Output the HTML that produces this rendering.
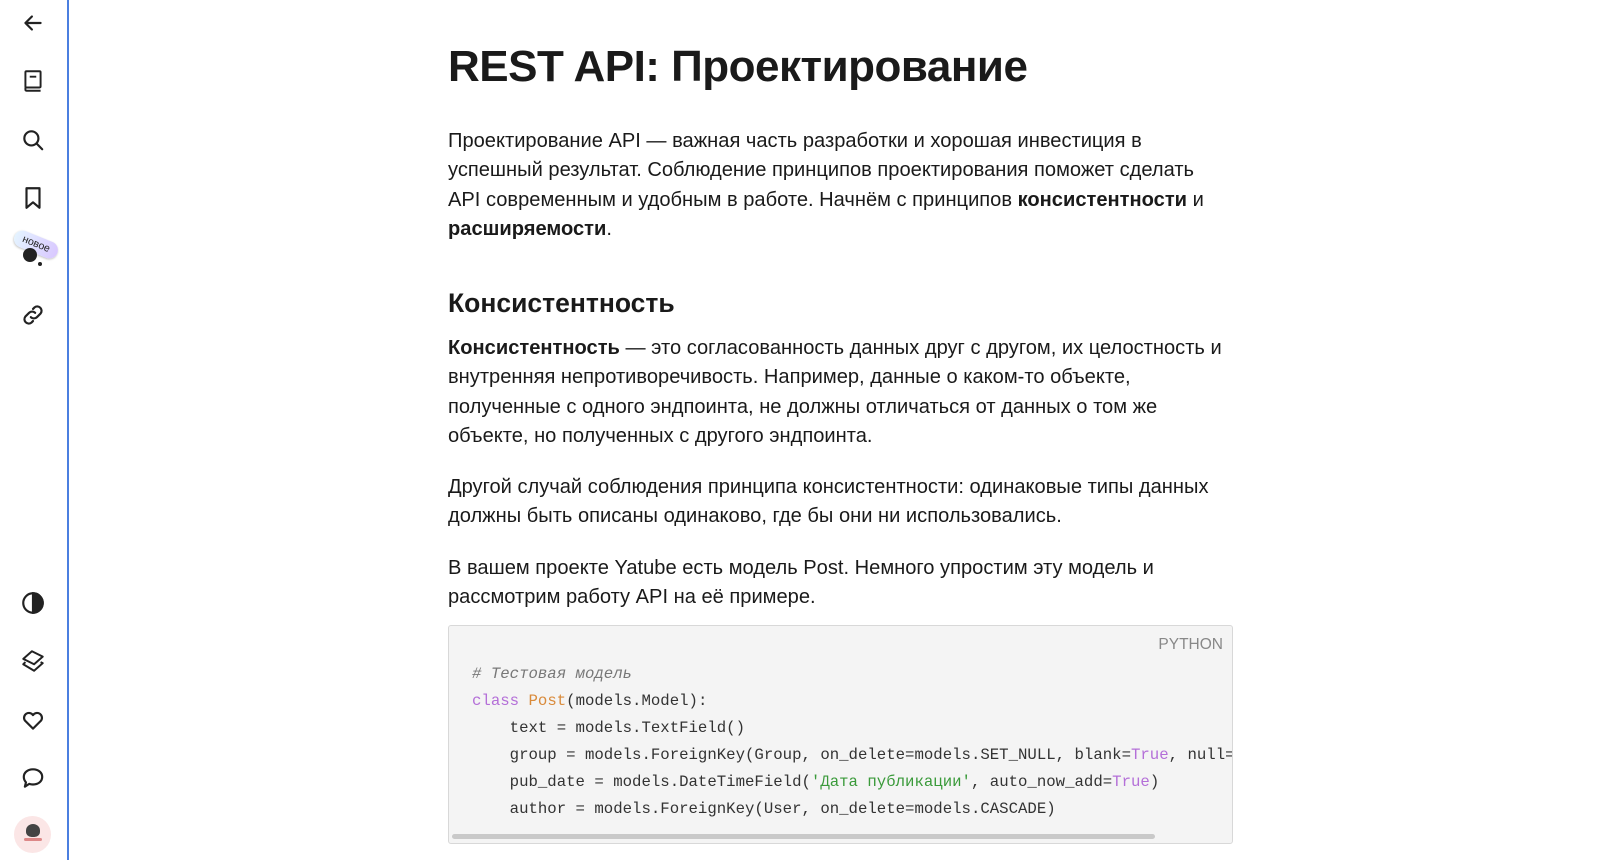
<!DOCTYPE html>
<html><head><meta charset="utf-8"><style>
body{margin:0;width:1600px;height:860px;background:#fff;font-family:"Liberation Sans",sans-serif;color:#1a1a1a;overflow:hidden;position:relative}
.side{position:absolute;left:0;top:0;width:67px;height:860px;border-right:2px solid #4b7fe0}
.ic{position:absolute;left:20px;width:26px;height:26px}
.main{position:absolute;left:448px;top:0;width:800px}
h1{position:absolute;top:42px;margin:0;font-size:44px;font-weight:700;white-space:nowrap;letter-spacing:-0.5px}
.p{position:absolute;font-size:20.1px;line-height:29.4px;white-space:nowrap}
h2{position:absolute;top:288px;margin:0;font-size:26.5px;font-weight:700;white-space:nowrap}
.code{position:absolute;left:448px;top:625px;width:783px;height:217px;background:#f4f4f4;border:1px solid #d8d8d8;border-radius:3px;overflow:hidden}
.code pre{margin:0;position:absolute;left:23px;top:35px;font-family:"Liberation Mono",monospace;font-size:15.7px;line-height:27px;color:#333}
.lang{position:absolute;right:9px;top:10px;font-size:15.5px;color:#888}
.sb{position:absolute;left:3px;bottom:4px;width:703px;height:5px;background:#c9c9c9;border-radius:3px}
</style></head><body>
<div class="side">
<svg class="ic" style="top:10px" viewBox="0 0 24 24" fill="none" stroke="#222" stroke-width="2" stroke-linecap="round" stroke-linejoin="round"><path d="M19 12H5M11 6l-6 6 6 6"/></svg>
<svg class="ic" style="top:68px" viewBox="0 0 24 24" fill="none" stroke="#222" stroke-width="1.8"><rect x="5" y="3" width="14" height="15" rx="1"/><path d="M5 18v2a1 1 0 0 0 1 1h13M9 8h6"/></svg>
<svg class="ic" style="top:127px" viewBox="0 0 24 24" fill="none" stroke="#222" stroke-width="2" stroke-linecap="round"><circle cx="10.5" cy="10.5" r="6.5"/><path d="M15.5 15.5l5 5"/></svg>
<svg class="ic" style="top:185px" viewBox="0 0 24 24" fill="none" stroke="#222" stroke-width="2" stroke-linejoin="round"><path d="M6 3h12v18l-6-5-6 5z"/></svg>
<div style="position:absolute;left:13px;top:236px;width:46px;height:17px;border-radius:9px;background:linear-gradient(90deg,#e4f3ff,#d9c8ff);transform:rotate(22deg);font-size:10.5px;text-align:center;line-height:17px;color:#222;box-shadow:0 1px 2px rgba(0,0,0,.25)">новое</div>
<div style="position:absolute;left:23px;top:248px;width:14px;height:14px;border-radius:50%;background:#222"></div>
<div style="position:absolute;left:38px;top:262px;width:4px;height:4px;border-radius:50%;background:#222"></div>
<svg class="ic" style="top:302px" viewBox="0 0 24 24" fill="none" stroke="#222" stroke-width="2" stroke-linecap="round"><path d="M10 14a4 4 0 0 0 5.6 0l3.5-3.5a4 4 0 0 0-5.6-5.6L12 6.4M14 10a4 4 0 0 0-5.6 0l-3.5 3.5a4 4 0 0 0 5.6 5.6l1.5-1.5"/></svg>
<svg class="ic" style="top:590px" viewBox="0 0 24 24" fill="none" stroke="#222" stroke-width="2"><circle cx="12" cy="12" r="9"/><path d="M12 3a9 9 0 0 1 0 18z" fill="#222"/></svg>
<svg class="ic" style="top:648px" viewBox="0 0 24 24" fill="none" stroke="#222" stroke-width="1.8" stroke-linejoin="round"><path d="M3 10l8-7 10 5-8 7z"/><path d="M3 10l2 1M5 13l-2 2 10 6 8-7-2-1"/></svg>
<svg class="ic" style="top:707px" viewBox="0 0 24 24" fill="none" stroke="#222" stroke-width="2" stroke-linejoin="round"><path d="M12 20l-7.5-7.5a4.5 4.5 0 0 1 7.5-5 4.5 4.5 0 0 1 7.5 5z"/></svg>
<svg class="ic" style="top:765px" viewBox="0 0 24 24" fill="none" stroke="#222" stroke-width="2" stroke-linejoin="round"><path d="M12 4c5 0 8.5 3 8.5 7s-3.5 7-8.5 7c-1.3 0-2.5-.2-3.5-.6L4.5 20l1-4C4.3 14.7 3.5 13 3.5 11c0-4 3.5-7 8.5-7z"/></svg>
<div style="position:absolute;left:14px;top:816px;width:37px;height:37px;border-radius:50%;background:#fbe6e6"></div>
<div style="position:absolute;left:26px;top:824px;width:14px;height:13px;border-radius:50% 50% 40% 40%;background:#444"></div>
<div style="position:absolute;left:24px;top:838px;width:18px;height:3px;background:#d88;border-radius:2px"></div>
</div>
<div class="main">
<h1>REST API: Проектирование</h1>
<div class="p" style="top:127px">Проектирование API — важная часть разработки и хорошая инвестиция в<br>успешный результат. Соблюдение принципов проектирования поможет сделать<br>API современным и удобным в работе. Начнём с принципов <b>консистентности</b> и<br><b>расширяемости</b>.</div>
<h2>Консистентность</h2>
<div class="p" style="top:334px"><b>Консистентность</b> — это согласованность данных друг с другом, их целостность и<br>внутренняя непротиворечивость. Например, данные о каком-то объекте,<br>полученные с одного эндпоинта, не должны отличаться от данных о том же<br>объекте, но полученных с другого эндпоинта.</div>
<div class="p" style="top:473px">Другой случай соблюдения принципа консистентности: одинаковые типы данных<br>должны быть описаны одинаково, где бы они ни использовались.</div>
<div class="p" style="top:554px">В вашем проекте Yatube есть модель Post. Немного упростим эту модель и<br>рассмотрим работу API на её примере.</div>
</div>
<div class="code"><div class="lang">PYTHON</div>
<pre><i style="color:#777"># Тестовая модель</i>
<span style="color:#b46fd8">class</span> <span style="color:#d98a3a">Post</span>(models.Model):
    text = models.TextField()
    group = models.ForeignKey(Group, on_delete=models.SET_NULL, blank=<span style="color:#b46fd8">True</span>, null=<span style="color:#b46fd8">True</span>)
    pub_date = models.DateTimeField(<span style="color:#3a9a3a">'Дата публикации'</span>, auto_now_add=<span style="color:#b46fd8">True</span>)
    author = models.ForeignKey(User, on_delete=models.CASCADE)</pre>
<div class="sb"></div></div>
</body></html>
